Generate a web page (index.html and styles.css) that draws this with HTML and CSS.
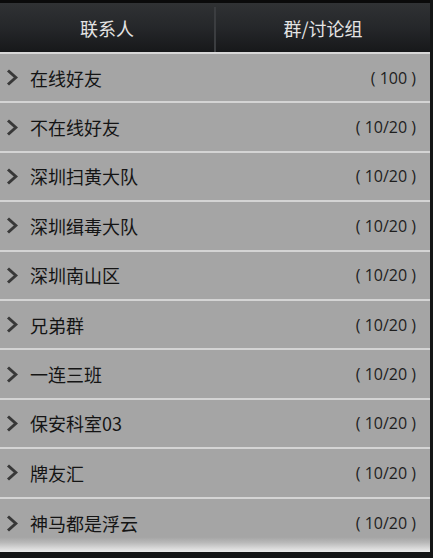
FILE: index.html
```html
<!DOCTYPE html>
<html lang="zh-CN">
<head>
<meta charset="utf-8">
<title>联系人</title>
<link rel="stylesheet" href="styles.css">
</head>
<body>
<div class="screen">
  <div class="status-strip"></div>
  <nav class="tabs">
    <div class="tab">联系人</div>
    <div class="tab-divider"></div>
    <div class="tab">群/讨论组</div>
  </nav>
  <ul class="groups">
    <li class="group"><svg class="chevron" viewBox="0 0 12 17"><path d="M2 1.5 L9.8 8.5 L2 15.5"/></svg><span class="name">在线好友</span><span class="count">( 100 )</span></li>
    <li class="group"><svg class="chevron" viewBox="0 0 12 17"><path d="M2 1.5 L9.8 8.5 L2 15.5"/></svg><span class="name">不在线好友</span><span class="count">( 10/20 )</span></li>
    <li class="group"><svg class="chevron" viewBox="0 0 12 17"><path d="M2 1.5 L9.8 8.5 L2 15.5"/></svg><span class="name">深圳扫黄大队</span><span class="count">( 10/20 )</span></li>
    <li class="group"><svg class="chevron" viewBox="0 0 12 17"><path d="M2 1.5 L9.8 8.5 L2 15.5"/></svg><span class="name">深圳缉毒大队</span><span class="count">( 10/20 )</span></li>
    <li class="group"><svg class="chevron" viewBox="0 0 12 17"><path d="M2 1.5 L9.8 8.5 L2 15.5"/></svg><span class="name">深圳南山区</span><span class="count">( 10/20 )</span></li>
    <li class="group"><svg class="chevron" viewBox="0 0 12 17"><path d="M2 1.5 L9.8 8.5 L2 15.5"/></svg><span class="name">兄弟群</span><span class="count">( 10/20 )</span></li>
    <li class="group"><svg class="chevron" viewBox="0 0 12 17"><path d="M2 1.5 L9.8 8.5 L2 15.5"/></svg><span class="name">一连三班</span><span class="count">( 10/20 )</span></li>
    <li class="group"><svg class="chevron" viewBox="0 0 12 17"><path d="M2 1.5 L9.8 8.5 L2 15.5"/></svg><span class="name">保安科室03</span><span class="count">( 10/20 )</span></li>
    <li class="group"><svg class="chevron" viewBox="0 0 12 17"><path d="M2 1.5 L9.8 8.5 L2 15.5"/></svg><span class="name">牌友汇</span><span class="count">( 10/20 )</span></li>
    <li class="group group-last"><svg class="chevron" viewBox="0 0 12 17"><path d="M2 1.5 L9.8 8.5 L2 15.5"/></svg><span class="name">神马都是浮云</span><span class="count">( 10/20 )</span></li>
  </ul>
</div>
</body>
</html>
```

FILE: styles.css
```css
html, body {
  margin: 0;
  padding: 0;
  background: #141516;
  height: 100%;
}

body {
  font-family: "Noto Sans CJK SC", "Noto Sans", "Open Sans", sans-serif;
}

.screen {
  width: 430px;
  display: flex;
  flex-direction: column;
}

.status-strip {
  height: 3px;
  background: #0a0a0a;
}

.tabs {
  height: 49px;
  display: flex;
  align-items: stretch;
  background: linear-gradient(to bottom, #303234 0%, #25272a 50%, #17181a 100%);
  border-bottom: 2px solid #d8d8d8;
}

.tab {
  flex: 1;
  display: flex;
  align-items: center;
  justify-content: center;
  color: #e4e4e4;
  font-size: 18px;
  font-weight: 400;
  padding-top: 1px;
}

.tab-divider {
  width: 2px;
  margin: 4px 0 0;
  background: #3b3d40;
}

.groups {
  list-style: none;
  margin: 0;
  padding: 0;
}

.group {
  height: 47.4px;
  display: flex;
  align-items: center;
  background: #a5a5a5;
  border-bottom: 2px solid #d4d4d4;
  padding: 0 14px 0 6px;
}

.group-last {
  height: 53px;
  border-bottom: 0;
  padding-bottom: 4px;
  box-sizing: border-box;
  background: linear-gradient(to bottom, #a5a5a5 0%, #a5a5a5 72%, #b8b8b8 82%, #d6d6d6 92%, #ececec 100%);
}

.chevron {
  width: 12px;
  height: 17px;
  flex: none;
  margin-right: 12px;
}

.chevron path {
  fill: none;
  stroke: #383838;
  stroke-width: 3;
  stroke-linecap: butt;
  stroke-linejoin: miter;
}

.name {
  flex: 1;
  color: #141414;
  font-size: 18px;
  line-height: 24px;
}

.count {
  color: #1e1e1e;
  font-family: "Open Sans", "Noto Sans", sans-serif;
  font-size: 16px;
  line-height: 24px;
  white-space: pre;
}
```
